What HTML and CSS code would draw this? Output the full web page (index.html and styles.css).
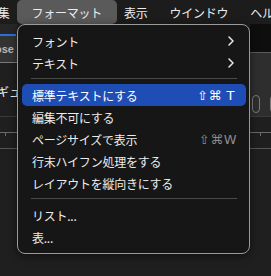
FILE: index.html
```html
<!DOCTYPE html>
<html lang="ja">
<head>
<meta charset="utf-8">
<link rel="stylesheet" href="styles.css">
</head>
<body>
<div class="screen">
  <nav class="menubar">
    <span class="mb-item">編集</span>
    <span class="mb-item active">フォーマット</span>
    <span class="mb-item">表示</span>
    <span class="mb-item">ウインドウ</span>
    <span class="mb-item">ヘルプ</span>
  </nav>

  <div class="workspace">
    <div class="top-area">
      <div class="side left">
        <div class="tabbar"></div>
        <div class="tab-ind"></div>
        <div class="field"><span>Close</span></div>
        <div class="pane"><span class="pane-text">ギュ</span></div>
      </div>
      <div class="side right">
        <div class="dark-block"></div>
        <div class="panel">
          <span class="btn"></span>
          <span class="btn"></span>
        </div>
      </div>
    </div>
    <div class="ruler">
      <div class="ruler-line"><span class="tick t1"></span><span class="tick t2"></span></div>
      <div class="ruler-line2"></div>
    </div>
  </div>

  <div class="menu">
    <div class="item"><span class="label">フォント</span>
      <svg class="chev" width="6" height="10" viewBox="0 0 6 10"><path d="M1 1 L5 5 L1 9" fill="none" stroke="#e8e8e8" stroke-width="1.5" stroke-linecap="round" stroke-linejoin="round"/></svg>
    </div>
    <div class="item"><span class="label">テキスト</span>
      <svg class="chev" width="6" height="10" viewBox="0 0 6 10"><path d="M1 1 L5 5 L1 9" fill="none" stroke="#e8e8e8" stroke-width="1.5" stroke-linecap="round" stroke-linejoin="round"/></svg>
    </div>
    <div class="sep"></div>
    <div class="item selected"><span class="label">標準テキストにする</span><span class="key">⇧⌘ T</span></div>
    <div class="item"><span class="label">編集不可にする</span></div>
    <div class="item"><span class="label">ページサイズで表示</span><span class="key dim">⇧⌘W</span></div>
    <div class="item"><span class="label">行末ハイフン処理をする</span></div>
    <div class="item"><span class="label">レイアウトを縦向きにする</span></div>
    <div class="sep"></div>
    <div class="item"><span class="label">リスト...</span></div>
    <div class="item"><span class="label">表...</span></div>
  </div>
</div>
</body>
</html>
```

FILE: styles.css
```css
html, body {
  margin: 0;
  padding: 0;
  background: #1f1f1f;
}
body {
  width: 271px;
  height: 276px;
  overflow: hidden;
  font-family: "Noto Sans CJK JP", "Noto Sans", sans-serif;
  color: #e8e8e8;
}
.screen {
  position: relative;
  width: 271px;
  height: 276px;
  overflow: hidden;
}

/* menu bar */
.menubar {
  display: flex;
  height: 24px;
  background: #1c1c1c;
  margin-left: -25px;
  white-space: nowrap;
}
.mb-item {
  display: flex;
  align-items: center;
  padding: 0 11px;
  font-size: 12px;
  letter-spacing: -0.25px;
  color: #ececec;
}
.mb-item.active {
  padding: 0 15px;
  margin: 0 -4px;
  background: #5a5a5a;
  border-radius: 5px;
}

/* background window */
.workspace {
  display: flex;
  flex-direction: column;
}
.top-area {
  display: flex;
  justify-content: space-between;
  height: 93px;
}
.side {
  display: flex;
  flex-direction: column;
}
.left { width: 17px; }
.right { width: 21px; }
.tabbar {
  height: 10px;
  background: #262626;
}
.tab-ind {
  height: 2px;
  background: #2d6fe0;
  margin-right: 1px;
}
.field {
  height: 26px;
  background: #333333;
  display: flex;
  justify-content: flex-end;
  align-items: center;
  overflow: hidden;
  border-bottom: 1px solid #7a7a7a;
  white-space: nowrap;
}
.field span {
  font-family: "Liberation Sans", sans-serif;
  font-size: 11px;
  font-weight: bold;
  color: #b8b8b8;
  padding-right: 3px;
}
.pane {
  flex: 1;
  display: flex;
  justify-content: flex-end;
  align-items: flex-start;
  overflow: hidden;
  border-bottom: 1px solid #3a3a3a;
  white-space: nowrap;
}
.pane-text {
  flex-shrink: 0;
  margin-top: 22px;
  font-size: 12px;
  line-height: 14px;
  color: #f0f0f0;
  margin-right: -4px;
}
.dark-block {
  height: 28px;
  background: #0e0e0e;
  border-bottom: 1px solid #5a5a5a;
}
.panel {
  flex: 1;
  background: #2e2e2e;
  display: flex;
  gap: 10px;
  padding: 42px 0 0 2px;
  box-sizing: border-box;
  border-bottom: 1px solid #3a3a3a;
}
.btn {
  width: 6px;
  height: 16px;
  border: 1px solid #7a7a7a;
  border-radius: 4px;
  flex-shrink: 0;
}
.ruler {
  padding-top: 15px;
}
.ruler-line {
  position: relative;
  height: 1px;
  background: #6a6a6a;
}
.tick {
  position: absolute;
  top: 1px;
  width: 1px;
  height: 3px;
  background: #6a6a6a;
}
.t1 { left: 5px; }
.t2 { left: 260px; }
.ruler-line2 {
  margin-top: 15px;
  height: 1px;
  background: #555;
}

/* dropdown menu */
.menu {
  position: absolute;
  left: 17px;
  top: 24px;
  width: 233px;
  height: 230px;
  box-sizing: border-box;
  background: #161616;
  border: 1px solid #9a9a9a;
  border-radius: 8px;
  padding: 5px 3px 4px 4px;
  display: flex;
  flex-direction: column;
  box-shadow: 0 2px 8px rgba(0,0,0,0.5);
}
.item {
  height: 22px;
  display: flex;
  align-items: center;
  justify-content: space-between;
  padding: 0 11px 0 10px;
  border-radius: 5px;
  font-size: 12px;
  letter-spacing: -0.25px;
  color: #ececec;
  white-space: nowrap;
}
.item.selected {
  background: #1e4db5;
  color: #ffffff;
}
.chev {
  margin-right: 1px;
}
.key {
  font-family: "DejaVu Sans", "Noto Sans", sans-serif;
  font-size: 13px;
  letter-spacing: 0.5px;
  color: #ffffff;
}
.key.dim {
  color: #8a8a8a;
  margin-right: -2px;
}
.sep {
  height: 1px;
  margin: 4px 9px 5px 9px;
  background: #4a4a4a;
}
```
